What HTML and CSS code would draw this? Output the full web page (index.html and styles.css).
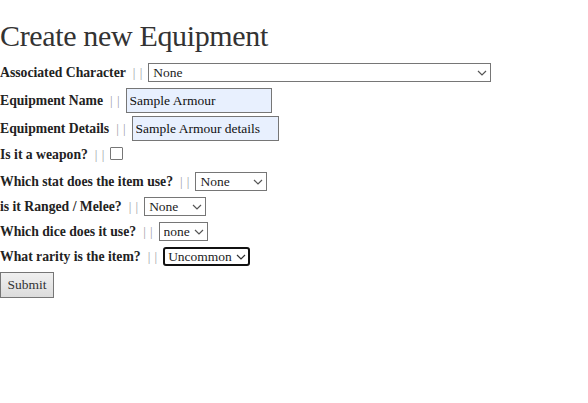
FILE: index.html
```html
<!DOCTYPE html>
<html>
<head>
<meta charset="utf-8">
<link rel="stylesheet" href="styles.css">
</head>
<body>
<h1 class="title">Create new Equipment</h1>
<form class="form">
  <div class="row row-sel">
    <label class="lbl">Associated Character</label><span class="sep">| |</span>
    <span class="selwrap"><select class="sel sel-char"><option>None</option></select><svg class="chev" width="10" height="6" viewBox="0 0 10 6"><path d="M1 1l4 4 4-4" fill="none" stroke="#555" stroke-width="1.2"/></svg></span>
  </div>
  <div class="row row-in1">
    <label class="lbl">Equipment Name</label><span class="sep">| |</span>
    <input class="txt txt-name" type="text" value="Sample Armour">
  </div>
  <div class="row row-in2">
    <label class="lbl">Equipment Details</label><span class="sep">| |</span>
    <input class="txt txt-det" type="text" value="Sample Armour details">
  </div>
  <div class="row row-chk">
    <label class="lbl">Is it a weapon?</label><span class="sep">| |</span>
    <span class="chk"></span>
  </div>
  <div class="row row-sel">
    <label class="lbl">Which stat does the item use?</label><span class="sep">| |</span>
    <span class="selwrap"><select class="sel sel-stat"><option>None</option></select><svg class="chev" width="10" height="6" viewBox="0 0 10 6"><path d="M1 1l4 4 4-4" fill="none" stroke="#555" stroke-width="1.2"/></svg></span>
  </div>
  <div class="row row-sel">
    <label class="lbl">is it Ranged / Melee?</label><span class="sep">| |</span>
    <span class="selwrap"><select class="sel sel-range"><option>None</option></select><svg class="chev" width="10" height="6" viewBox="0 0 10 6"><path d="M1 1l4 4 4-4" fill="none" stroke="#555" stroke-width="1.2"/></svg></span>
  </div>
  <div class="row row-sel">
    <label class="lbl">Which dice does it use?</label><span class="sep">| |</span>
    <span class="selwrap"><select class="sel sel-dice"><option>none</option></select><svg class="chev" width="10" height="6" viewBox="0 0 10 6"><path d="M1 1l4 4 4-4" fill="none" stroke="#555" stroke-width="1.2"/></svg></span>
  </div>
  <div class="row row-sel">
    <label class="lbl">What rarity is the item?</label><span class="sep">| |</span>
    <span class="selwrap"><select class="sel sel-rar"><option>Uncommon</option></select><svg class="chev" width="10" height="6" viewBox="0 0 10 6"><path d="M1 1l4 4 4-4" fill="none" stroke="#333" stroke-width="1.2"/></svg></span>
  </div>
  <div class="row">
    <button class="btn" type="button">Submit</button>
  </div>
</form>
</body>
</html>
```
FILE: styles.css
```css
html, body {
  margin: 0;
  padding: 0;
  background: #fff;
}
body {
  font-family: "Liberation Serif", "Times New Roman", serif;
  color: #222;
}
.title {
  margin: 0;
  padding-top: 19px;
  height: 63px;
  box-sizing: border-box;
  font-size: 30px;
  font-weight: normal;
  line-height: 34px;
  color: #333;
  letter-spacing: -0.35px;
}
.form {
  display: flex;
  flex-direction: column;
  align-items: flex-start;
}
.row {
  display: flex;
  align-items: center;
  font-size: 13.5px;
}
.row-sel { height: 19px; margin-bottom: 6px; }
.row-in1 { height: 25px; margin-bottom: 3px; }
.row-in2 { height: 25px; margin-bottom: 5px; }
.row-chk { height: 17px; margin-bottom: 9px; }
.lbl {
  font-weight: bold;
  font-size: 13.7px;
}
.sep {
  color: #9a9aa6;
  font-size: 13px;
  margin: 0 6px 0 7px;
  word-spacing: 1px;
}
.selwrap {
  position: relative;
  display: inline-flex;
}
.sel {
  appearance: none;
  -webkit-appearance: none;
  height: 19px;
  box-sizing: border-box;
  border: 1px solid #767676;
  border-radius: 0;
  background: #fff;
  font-family: "Liberation Serif", serif;
  font-size: 13.5px;
  color: #222;
  padding: 0 0 0 4px;
  margin: 0;
}
.chev {
  position: absolute;
  right: 4px;
  top: 7px;
  pointer-events: none;
}
.sel-char { width: 343px; }
.sel-stat { width: 72px; }
.sel-range { width: 62px; }
.sel-dice { width: 49px; }
.sel-rar {
  width: 87px;
  border: 2px solid #111;
  border-radius: 3px;
  padding-left: 3px;
}
.txt {
  height: 25px;
  box-sizing: border-box;
  border: 1px solid #767676;
  background: #e8f0fe;
  font-family: "Liberation Serif", serif;
  font-size: 13.5px;
  color: #111;
  padding: 0 3px;
  margin: 0;
}
.txt-name { width: 146px; }
.txt-det { width: 147px; }
.chk {
  display: inline-block;
  width: 11px;
  height: 11px;
  border: 1px solid #767676;
  border-radius: 1px;
  background: #fff;
  margin-bottom: 2px;
}
.btn {
  height: 26px;
  width: 54px;
  box-sizing: border-box;
  border: 1px solid #767676;
  border-radius: 0;
  background: linear-gradient(#f0f0f0, #dcdcdc);
  font-family: "Liberation Serif", serif;
  font-size: 13.5px;
  color: #333;
  padding: 0;
  margin: 0;
}
```
